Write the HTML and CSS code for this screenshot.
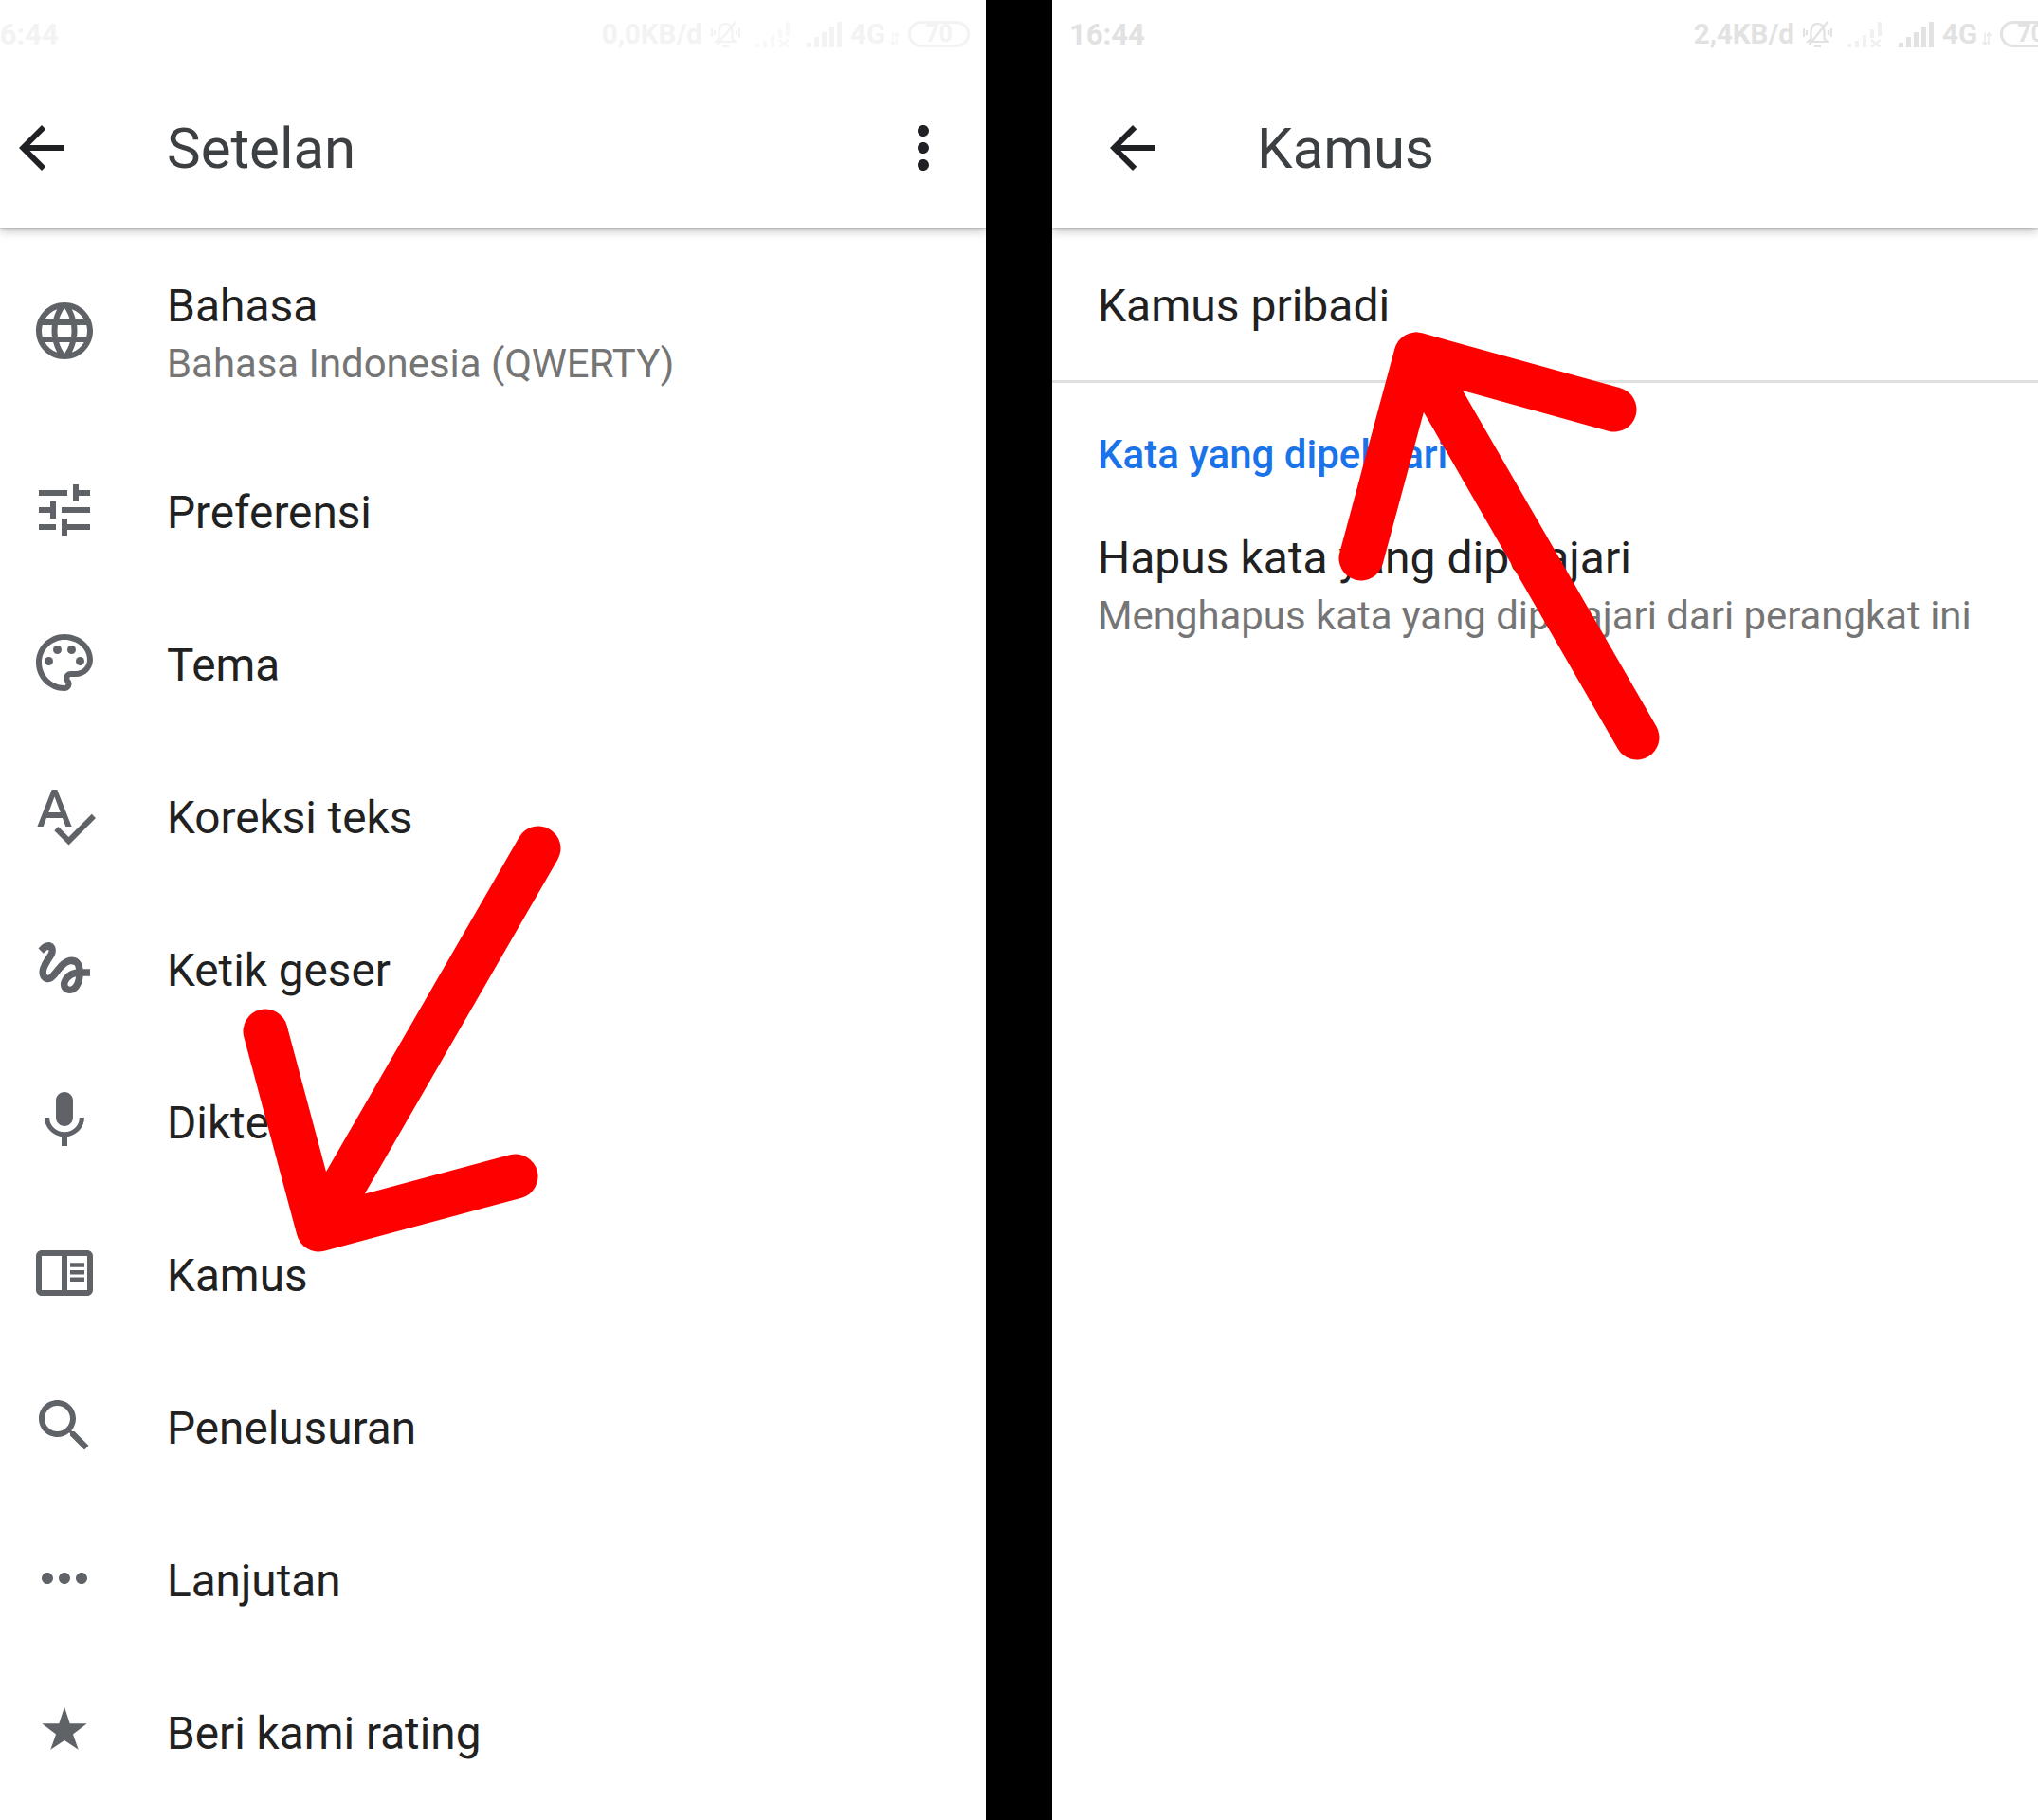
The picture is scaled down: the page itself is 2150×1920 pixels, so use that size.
FILE: index.html
```html
<!DOCTYPE html>
<html lang="id">
<head>
  <meta charset="UTF-8">
  <title>Setelan dan Kamus</title>
  <link rel="stylesheet" href="styles.css">
</head>
<body>
  <div class="screens">
    <section class="phone">
      <div class="status status-faint">
        <span class="clock clock-cut">16:44</span>
        <div class="status-right">
          <span>0,0KB/d</span>
          <svg class="st-bell" viewBox="0 0 31 32"><path d="M15.500 5c-5 0-7 4-7 9v7l-3 3h20l-3-3v-7c0-5-2-9-7-9zM12 29h7M6 28L26 3M1 10v9M4 12v5M30 10v9M27 12v5" fill="none" stroke="currentColor" stroke-width="2.200"/></svg>
          <svg class="st-sig st-sig-off" viewBox="0 0 39 27"><path d="M1 27v-4h4v4zM9 27v-7h4v7zM17 27V14h4v13zM25 17V8h4v9zM33 15V0h4v15z" fill="currentColor"/><path d="M26 19l10 8M36 19l-10 8" stroke="currentColor" stroke-width="2.500"/></svg>
          <svg class="st-sig" viewBox="0 0 39 27"><path d="M1 27v-5h5v5zM9 27V16h5v11zM17 27V11h5v16zM25 27V5h5v22zM33 27V0h5v27z" fill="currentColor"/></svg>
          <span class="st-net">4G</span>
          <svg class="st-arrows" viewBox="0 0 10 16"><path d="M3 1v13M0 11l3 3 3-3M7 15V3M5 5l2-3 3 3" fill="none" stroke="currentColor" stroke-width="1.500"/></svg>
          <span class="battery">70</span>
        </div>
      </div>
      <header class="toolbar">
        <svg class="back" viewBox="0 0 24 24"><path d="M20 11H7.830l5.590-5.590L12 4l-8 8 8 8 1.410-1.410L7.830 13H20v-2z"/></svg>
        <h1>Setelan</h1>
        <svg class="kebab" viewBox="0 0 24 24"><path d="M12 8c1.100 0 2-.9 2-2s-.9-2-2-2-2 .9-2 2 .9 2 2 2zm0 2c-1.100 0-2 .9-2 2s.9 2 2 2 2-.9 2-2-.9-2-2-2zm0 6c-1.100 0-2 .9-2 2s.9 2 2 2 2-.9 2-2-.9-2-2-2z"/></svg>
      </header>
      <ul class="settings">
        <li class="row row-tall">
          <svg class="ico" viewBox="0 0 24 24"><path d="M11.990 2C6.470 2 2 6.480 2 12s4.470 10 9.990 10C17.520 22 22 17.520 22 12S17.520 2 11.990 2zm6.930 6h-2.950c-.32-1.250-.78-2.450-1.380-3.560 1.840.63 3.370 1.910 4.330 3.560zM12 4.040c.83 1.200 1.480 2.530 1.910 3.960h-3.820c.43-1.430 1.080-2.760 1.910-3.960zM4.260 14C4.100 13.360 4 12.690 4 12s.1-1.360.26-2h3.380c-.08.66-.14 1.320-.14 2 0 .68.06 1.340.14 2H4.260zm.82 2h2.950c.32 1.250.78 2.450 1.380 3.560-1.840-.63-3.370-1.900-4.330-3.560zm2.950-8H5.080c.96-1.660 2.490-2.930 4.330-3.560C8.810 5.550 8.350 6.750 8.030 8zM12 19.960c-.83-1.200-1.480-2.530-1.910-3.960h3.820c-.43 1.430-1.080 2.760-1.910 3.960zM14.340 14H9.660c-.09-.66-.16-1.320-.16-2 0-.68.07-1.350.16-2h4.680c.09.65.16 1.320.16 2 0 .68-.07 1.340-.16 2zm.25 5.560c.6-1.110 1.060-2.310 1.380-3.560h2.950c-.96 1.650-2.490 2.930-4.330 3.560zM16.360 14c.08-.66.14-1.320.14-2 0-.68-.06-1.340-.14-2h3.380c.16.64.26 1.310.26 2s-.1 1.360-.26 2h-3.380z"/></svg>
          <div class="two-line"><div class="label">Bahasa</div><div class="sub">Bahasa Indonesia (QWERTY)</div></div>
        </li>
        <li class="row">
          <svg class="ico" viewBox="0 0 24 24"><path d="M3 17v2h6v-2H3zM3 5v2h10V5H3zm10 16v-2h8v-2h-8v-2h-2v6h2zM7 9v2H3v2h4v2h2V9H7zm14 4v-2H11v2h10zm-6-4h2V7h4V5h-4V3h-2v6z"/></svg>
          <div class="label">Preferensi</div>
        </li>
        <li class="row">
          <svg class="ico" viewBox="0 0 24 24"><path d="M12 22C6.490 22 2 17.510 2 12S6.490 2 12 2s10 4.040 10 9c0 3.310-2.690 6-6 6h-1.770c-.28 0-.5.22-.5.5 0 .12.05.23.13.33.41.47.64 1.060.64 1.670 0 1.380-1.120 2.500-2.500 2.500zm0-18c-4.410 0-8 3.590-8 8s3.590 8 8 8c.28 0 .5-.22.5-.5 0-.16-.08-.28-.14-.35-.41-.46-.63-1.050-.63-1.650 0-1.380 1.120-2.500 2.500-2.500H16c2.210 0 4-1.790 4-4 0-3.860-3.590-7-8-7z"/><circle cx="6.500" cy="11.500" r="1.500"/><circle cx="9.500" cy="7.500" r="1.500"/><circle cx="14.500" cy="7.500" r="1.500"/><circle cx="17.500" cy="11.500" r="1.500"/></svg>
          <div class="label">Tema</div>
        </li>
        <li class="row">
          <svg class="ico" viewBox="0 0 24 24"><path d="M12.450 16h2.090L9.430 3H7.570L2.460 16h2.090l1.120-3h5.640l1.140 3zm-6.020-5L8.500 5.480 10.570 11H6.430zm15.160.59l-8.090 8.090L9.830 16l-1.410 1.410 5.090 5.090L23 13l-1.410-1.410z"/></svg>
          <div class="label">Koreksi teks</div>
        </li>
        <li class="row">
          <svg class="ico" viewBox="0 0 24 24"><path d="M4.590 6.890c.7-.71 1.400-1.350 1.710-1.220.5.2 0 1.030-.3 1.520-.25.42-2.860 3.890-2.860 6.310 0 1.280.48 2.340 1.340 2.980.75.56 1.740.73 2.640.46 1.070-.31 1.950-1.400 3.060-2.770 1.210-1.490 2.830-3.440 4.080-3.440 1.630 0 1.650 1.010 1.760 1.790-3.780.64-5.380 3.670-5.380 5.370 0 1.700 1.440 3.090 3.210 3.090 1.630 0 4.290-1.330 4.690-6.100H21v-2.500h-2.470c-.15-1.650-1.090-4.200-4.030-4.200-2.250 0-4.180 1.910-4.940 2.840-.58.73-2.060 2.480-2.290 2.720-.25.3-.68.84-1.110.84-.45 0-.72-.83-.36-1.920.35-1.090 1.400-2.860 1.850-3.520.78-1.140 1.300-1.920 1.300-3.280C8.950 3.690 7.310 3 6.440 3 5.120 3 3.970 4 3.720 4.250c-.36.36-.66.66-.88.93l1.750 1.710zm9.290 11.660c-.31 0-.74-.26-.74-.72 0-.6.73-2.200 2.870-2.760-.3 2.690-1.430 3.480-2.130 3.480z"/></svg>
          <div class="label">Ketik geser</div>
        </li>
        <li class="row">
          <svg class="ico" viewBox="0 0 24 24"><path d="M12 14c1.660 0 2.990-1.340 2.990-3L15 5c0-1.660-1.340-3-3-3S9 3.340 9 5v6c0 1.660 1.340 3 3 3zm5.300-3c0 3-2.540 5.100-5.300 5.100S6.700 14 6.700 11H5c0 3.410 2.720 6.230 6 6.720V21h2v-3.280c3.280-.48 6-3.300 6-6.720h-1.700z"/></svg>
          <div class="label">Dikte</div>
        </li>
        <li class="row">
          <svg class="ico" viewBox="0 0 24 24"><path d="M20 4H4c-1.100 0-2 .9-2 2v12c0 1.100.9 2 2 2h16c1.100 0 2-.9 2-2V6c0-1.100-.9-2-2-2zM4 18V6h7v12H4zm16 0h-7V6h7v12zM14 8.400h5v1.500h-5zM14 11h5v1.500h-5zM14 13.500h5V15h-5z"/></svg>
          <div class="label">Kamus</div>
        </li>
        <li class="row">
          <svg class="ico" viewBox="0 0 24 24"><path d="M15.500 14h-.79l-.28-.27C15.410 12.590 16 11.110 16 9.500 16 5.910 13.090 3 9.500 3S3 5.910 3 9.500 5.910 16 9.500 16c1.610 0 3.090-.59 4.230-1.570l.27.28v.79l5 4.990L20.490 19l-4.990-5zm-6 0C7.010 14 5 11.990 5 9.500S7.010 5 9.500 5 14 7.010 14 9.500 11.990 14 9.500 14z"/></svg>
          <div class="label">Penelusuran</div>
        </li>
        <li class="row">
          <svg class="ico" viewBox="0 0 24 24"><path d="M6 10c-1.100 0-2 .9-2 2s.9 2 2 2 2-.9 2-2-.9-2-2-2zm12 0c-1.100 0-2 .9-2 2s.9 2 2 2 2-.9 2-2-.9-2-2-2zm-6 0c-1.100 0-2 .9-2 2s.9 2 2 2 2-.9 2-2-.9-2-2-2z"/></svg>
          <div class="label">Lanjutan</div>
        </li>
        <li class="row">
          <svg class="ico" viewBox="0 0 24 24"><path d="M12 3.600l1.900 5.800h6L15 13.200l1.900 5.400-4.900-3.300-4.900 3.300L9 13.200 4.100 9.400h6z"/></svg>
          <div class="label">Beri kami rating</div>
        </li>
      </ul>
      <!-- red marker drawn over the list -->
      <svg class="arrow arrow-left" viewBox="0 0 400 480"><path d="M332 25L100 427M44 218l56 209 208-56" fill="none" stroke="#ff0000" stroke-width="47" stroke-linecap="round" stroke-linejoin="round"/></svg>
    </section>

    <section class="phone phone-right">
      <div class="status">
        <span class="clock">16:44</span>
        <div class="status-right">
          <span>2,4KB/d</span>
          <svg class="st-bell" viewBox="0 0 31 32"><path d="M15.500 5c-5 0-7 4-7 9v7l-3 3h20l-3-3v-7c0-5-2-9-7-9zM12 29h7M6 28L26 3M1 10v9M4 12v5M30 10v9M27 12v5" fill="none" stroke="currentColor" stroke-width="2.200"/></svg>
          <svg class="st-sig st-sig-off" viewBox="0 0 39 27"><path d="M1 27v-4h4v4zM9 27v-7h4v7zM17 27V14h4v13zM25 17V8h4v9zM33 15V0h4v15z" fill="currentColor"/><path d="M26 19l10 8M36 19l-10 8" stroke="currentColor" stroke-width="2.500"/></svg>
          <svg class="st-sig" viewBox="0 0 39 27"><path d="M1 27v-5h5v5zM9 27V16h5v11zM17 27V11h5v16zM25 27V5h5v22zM33 27V0h5v27z" fill="currentColor"/></svg>
          <span class="st-net">4G</span>
          <svg class="st-arrows" viewBox="0 0 10 16"><path d="M3 1v13M0 11l3 3 3-3M7 15V3M5 5l2-3 3 3" fill="none" stroke="currentColor" stroke-width="1.500"/></svg>
          <span class="battery">70</span>
        </div>
      </div>
      <header class="toolbar">
        <svg class="back" viewBox="0 0 24 24"><path d="M20 11H7.830l5.590-5.590L12 4l-8 8 8 8 1.410-1.410L7.830 13H20v-2z"/></svg>
        <h1>Kamus</h1>
      </header>
      <div class="dict-own label">Kamus pribadi</div>
      <div class="dict-group">Kata yang dipelajari</div>
      <div class="dict-item">
        <div class="label">Hapus kata yang dipelajari</div>
        <div class="sub">Menghapus kata yang dipelajari dari perangkat ini</div>
      </div>
      <svg class="arrow arrow-right" viewBox="0 0 340 460"><path d="M83 32l233 404M83 32L25 247M83 32l209 58" fill="none" stroke="#ff0000" stroke-width="47" stroke-linecap="round" stroke-linejoin="round"/></svg>
    </section>
  </div>
</body>
</html>
```

FILE: styles.css
```css
* { box-sizing: border-box; }
html, body { margin: 0; padding: 0; }
body {
  width: 2150px;
  height: 1920px;
  overflow: hidden;
  background: #000;
  font-family: Roboto, "Noto Sans", sans-serif;
}
.screens {
  display: grid;
  grid-template-columns: 1040px 1040px;
  column-gap: 70px;
  height: 1920px;
}
.phone {
  position: relative;
  background: #fff;
  overflow: hidden;
  height: 1920px;
}

/* status bar */
.status {
  display: flex;
  align-items: center;
  justify-content: space-between;
  height: 76px;
  padding: 0 0 4px 18px;
  color: #e2e2e2;
  font-size: 29.5px;
  font-weight: 700;
}
.status-faint { color: #f3f3f3; padding: 0 17px 4px 0; }
.clock { font-size: 31px; }
.clock-cut { margin-left: -18px; }
.status-right { display: flex; align-items: center; }
.phone-right .status-right { margin-right: -25px; }
.st-bell { width: 31px; height: 32px; margin-left: 9px; }
.st-sig { width: 39px; height: 27px; margin-left: 15px; }
.st-sig-off { opacity: .5; }
.st-net { margin-left: 8px; }
.st-arrows { width: 10px; height: 16px; margin: 10px 0 0 5px; opacity: .7; }
.battery {
  width: 65px;
  height: 28px;
  margin-left: 9px;
  border: 3px solid currentColor;
  border-radius: 14px;
  font-size: 25px;
  line-height: 22px;
  text-align: center;
}

/* toolbar */
.toolbar {
  position: relative;
  display: flex;
  align-items: center;
  height: 165px;
  padding: 0 0 0 8px;
  box-shadow: 0 1px 2px rgba(0,0,0,.22), 0 4px 9px rgba(0,0,0,.18);
  clip-path: inset(0 0 -30px 0);
}
.toolbar h1 {
  flex: 1;
  margin: 0 0 4px 96px;
  font-size: 60px;
  font-weight: 400;
  color: #3c4043;
}
.back { width: 72px; height: 72px; margin-bottom: 5px; fill: #202124; }
.kebab { width: 72px; height: 72px; margin: 0 30px 5px 0; fill: #202124; }

/* list */
.settings {
  list-style: none;
  margin: 0;
  padding: 0;
}
.row {
  display: flex;
  align-items: center;
  height: 161px;
  padding-left: 32px;
  gap: 72px;
}
.row-tall { height: 218px; }
.ico {
  width: 72px;
  height: 72px;
  flex: none;
  margin-bottom: 3px;
  fill: #5f6368;
}
.two-line { padding-top: 6px; }
.label { font-size: 48px; color: #212121; line-height: 60px; }
.row > .label { padding-top: 2px; font-size: 47.7px; }
.sub { font-size: 41.9px; color: #757575; line-height: 61px; }

/* second screen */
.phone-right .toolbar { padding-left: 49px; }
.phone-right .toolbar h1 { margin-left: 95px; }
.dict-own {
  height: 163px;
  padding: 52px 0 0 48px;
  border-bottom: 3px solid #e0e0e0;
}
.dict-group {
  padding: 51px 0 0 48px;
  font-size: 42px;
  font-weight: 500;
  line-height: 50px;
  color: #1a73e8;
}
.dict-item { padding: 54px 0 0 48px; }

/* red arrows lie over the content */
.arrow { position: absolute; }
.arrow-left { left: 236px; top: 870px; width: 400px; height: 480px; }
.arrow-right { left: 301px; top: 342px; width: 340px; height: 460px; }
```
